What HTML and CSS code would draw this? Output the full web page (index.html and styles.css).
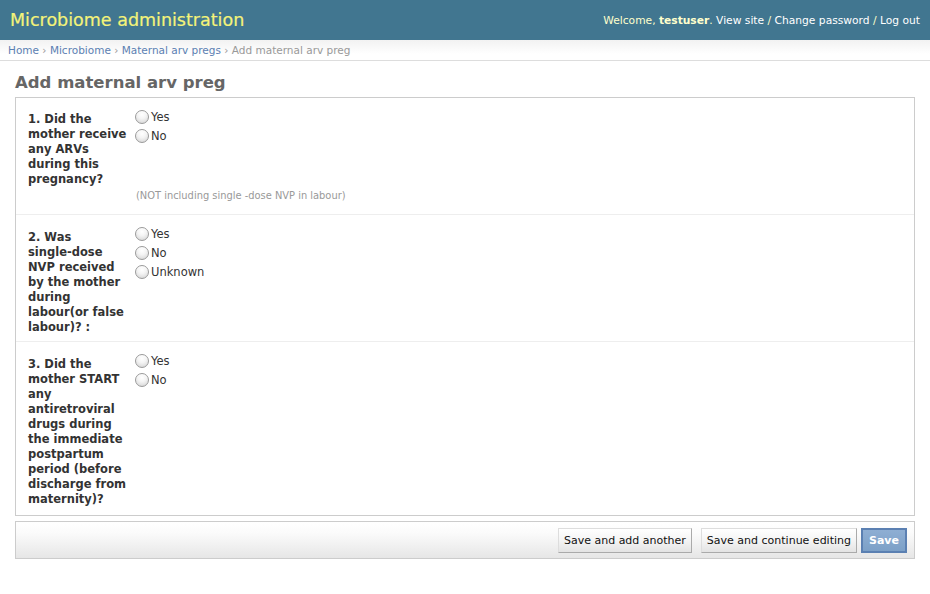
FILE: index.html
```html
<!DOCTYPE html>
<html lang="en">
<head>
<meta charset="utf-8">
<title>Add maternal arv preg | Microbiome administration</title>
<link rel="stylesheet" href="styles.css">
</head>
<body>
<div class="header">
  <h1 class="site-name">Microbiome administration</h1>
  <div class="user-tools">Welcome, <strong>testuser</strong>. <a href="#">View site</a> / <a href="#">Change password</a> / <a href="#">Log out</a></div>
</div>
<div class="breadcrumbs"><a href="#">Home</a> › <a href="#">Microbiome</a> › <a href="#">Maternal arv pregs</a> › Add maternal arv preg</div>
<div class="content">
  <h1 class="title">Add maternal arv preg</h1>
  <form>
    <fieldset class="module">
      <div class="form-row first">
        <div class="row-main">
          <label class="q">1. Did the<br>mother receive<br>any ARVs<br>during this<br>pregnancy?</label>
          <ul class="radios">
            <li><label><input type="radio" name="q1"><span>Yes</span></label></li>
            <li><label><input type="radio" name="q1"><span>No</span></label></li>
          </ul>
        </div>
        <p class="help">(NOT including single -dose NVP in labour)</p>
      </div>
      <div class="form-row">
        <div class="row-main">
          <label class="q">2. Was<br>single-dose<br>NVP received<br>by the mother<br>during<br>labour(or false<br>labour)? :</label>
          <ul class="radios">
            <li><label><input type="radio" name="q2"><span>Yes</span></label></li>
            <li><label><input type="radio" name="q2"><span>No</span></label></li>
            <li><label><input type="radio" name="q2"><span>Unknown</span></label></li>
          </ul>
        </div>
      </div>
      <div class="form-row last">
        <div class="row-main">
          <label class="q">3. Did the<br>mother START<br>any<br>antiretroviral<br>drugs during<br>the immediate<br>postpartum<br>period (before<br>discharge from<br>maternity)?</label>
          <ul class="radios">
            <li><label><input type="radio" name="q3"><span>Yes</span></label></li>
            <li><label><input type="radio" name="q3"><span>No</span></label></li>
          </ul>
        </div>
      </div>
    </fieldset>
    <div class="submit-row">
      <button type="button" class="btn">Save and add another</button>
      <button type="button" class="btn">Save and continue editing</button>
      <button type="button" class="btn default">Save</button>
    </div>
  </form>
</div>
</body>
</html>
```
FILE: styles.css
```css
* { box-sizing: border-box; }
html, body { margin: 0; padding: 0; }
body {
  font-family: "DejaVu Sans", Verdana, sans-serif;
  font-size: 12px;
  color: #333;
  background: #fff;
}
a { text-decoration: none; }

.header {
  height: 40px;
  background: #417690;
  display: flex;
  align-items: center;
  justify-content: space-between;
  padding: 0 10px;
}
.site-name {
  margin: 0;
  font-size: 17.5px;
  font-weight: normal;
  color: #f4f379;
  -webkit-text-stroke: 0.2px #f4f379;
}
.user-tools {
  font-size: 10.7px;
  color: #ffc;
}
.user-tools strong { font-weight: bold; }
.user-tools a { color: #fff; }

.breadcrumbs {
  height: 21px;
  padding: 4px 8px 0;
  font-size: 10.5px;
  color: #999;
  background: linear-gradient(#f2f2f2, #fff 70%);
  border-bottom: 1px solid #ddd;
}
.breadcrumbs a { color: #5b80b2; }

.content { padding: 10px 15px; }
.title {
  margin: 0 0 2px;
  font-size: 16.5px;
  line-height: 24px;
  color: #666;
  font-weight: bold;
}
form { margin: 0; }
.module {
  margin: 0;
  padding: 0;
  border: 1px solid #ccc;
  min-width: 0;
}
.form-row {
  padding: 9px 12px 6px;
  border-bottom: 1px solid #eee;
}
.form-row.first { padding-bottom: 8px; }
.form-row.last { border-bottom: 0; padding-bottom: 8px; }
.row-main { display: flex; align-items: flex-start; }
.q {
  width: 107px;
  flex: none;
  padding-top: 6px;
  font-weight: bold;
  font-size: 11.5px;
  line-height: 15px;
  white-space: nowrap;
  color: #333;
}
.form-row.first .q { padding-top: 5px; }
.radios {
  list-style: none;
  margin: 0;
  padding: 0;
}
.radios li { height: 19px; }
.radios label {
  display: flex;
  align-items: center;
  height: 19px;
  font-size: 11.5px;
  color: #333;
}
.radios input {
  appearance: none;
  -webkit-appearance: none;
  width: 14px;
  height: 14px;
  margin: 0 2px 0 0;
  border: 1px solid #9a9a9a;
  border-radius: 50%;
  background: radial-gradient(circle at 50% 30%, #fff 0%, #f4f4f4 40%, #d0d0d0 100%);
  box-shadow: inset 0 1px 1px rgba(255,255,255,0.8);
}
.help {
  margin: 2px 0 4px 108px;
  font-size: 9.9px;
  line-height: 13px;
  color: #999;
}

.submit-row {
  margin-top: 5px;
  height: 38px;
  border: 1px solid #ccc;
  background: linear-gradient(#fff, #fbfbfb 30%, #e6e6e6);
  display: flex;
  justify-content: flex-end;
  align-items: center;
  gap: 9px;
  padding: 0 7px;
}
.btn {
  font-family: "DejaVu Sans", Verdana, sans-serif;
  font-size: 11px;
  height: 25px;
  padding: 0 5px;
  color: #111;
  border: 1px solid #bbb;
  border-color: #ddd #aaa #aaa #ddd;
  background: linear-gradient(#fff, #f4f4f4 50%, #e3e3e3);
  margin: 0;
}
.btn.default {
  margin-left: -5px;
  height: 25px;
  padding: 0 6px;
  border: 2px solid #5b80b2;
  background: linear-gradient(#8eaed3, #7ca0c7);
  color: #fff;
  font-weight: bold;
}
```
